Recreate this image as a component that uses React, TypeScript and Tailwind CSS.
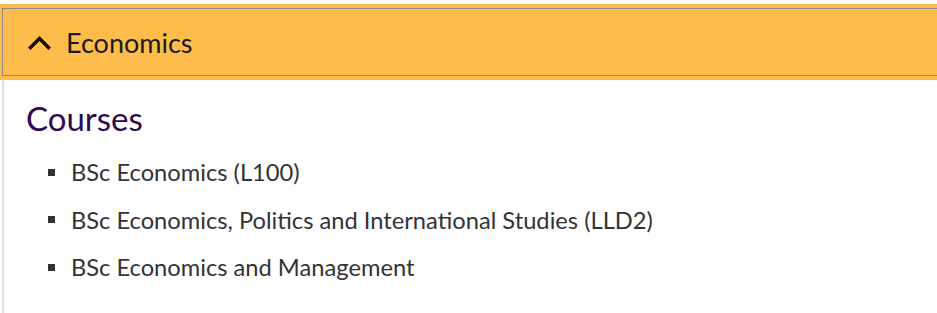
import React from 'react';

const courses = [
  'BSc Economics (L100)',
  'BSc Economics, Politics and International Studies (LLD2)',
  'BSc Economics and Management',
];

export default function App() {
  return (
    <div className="w-[937px] h-[313px] bg-white overflow-hidden pt-1 font-['Lato','Liberation_Sans',sans-serif]">
      {/* Accordion header */}
      <div className="bg-[#febd4a] py-1 pl-[2px] overflow-hidden">
        <button className="-mr-4 w-[calc(100%+16px)] h-[68px] flex items-center gap-[15px] border border-[#8c8c8c] pl-[25px] text-left">
          <svg width="23" height="15" viewBox="0 0 23 15" fill="none" className="shrink-0">
            <path d="M2.5 12.5 L11.5 3.5 L20.5 12.5" stroke="#111" strokeWidth="3.6" strokeLinecap="square" />
          </svg>
          <span className="text-[27px] text-[#1a1a1a] leading-none">Economics</span>
        </button>
      </div>

      {/* Panel */}
      <div className="ml-[2px] border-l-2 border-[#e0e0e0] h-full pl-[22px] pt-[22px]">
        <h2 className="text-[33px] leading-none text-[#2e0b4f]">Courses</h2>
        <ul className="mt-[25px] flex flex-col gap-[23.5px] pl-[22px]">
          {courses.map((c) => (
            <li key={c} className="flex items-center gap-[16px] text-[23.7px] leading-[24px] text-[#333]">
              <span className="w-[7px] h-[7px] bg-[#333] shrink-0" />
              {c}
            </li>
          ))}
        </ul>
      </div>
    </div>
  );
}
